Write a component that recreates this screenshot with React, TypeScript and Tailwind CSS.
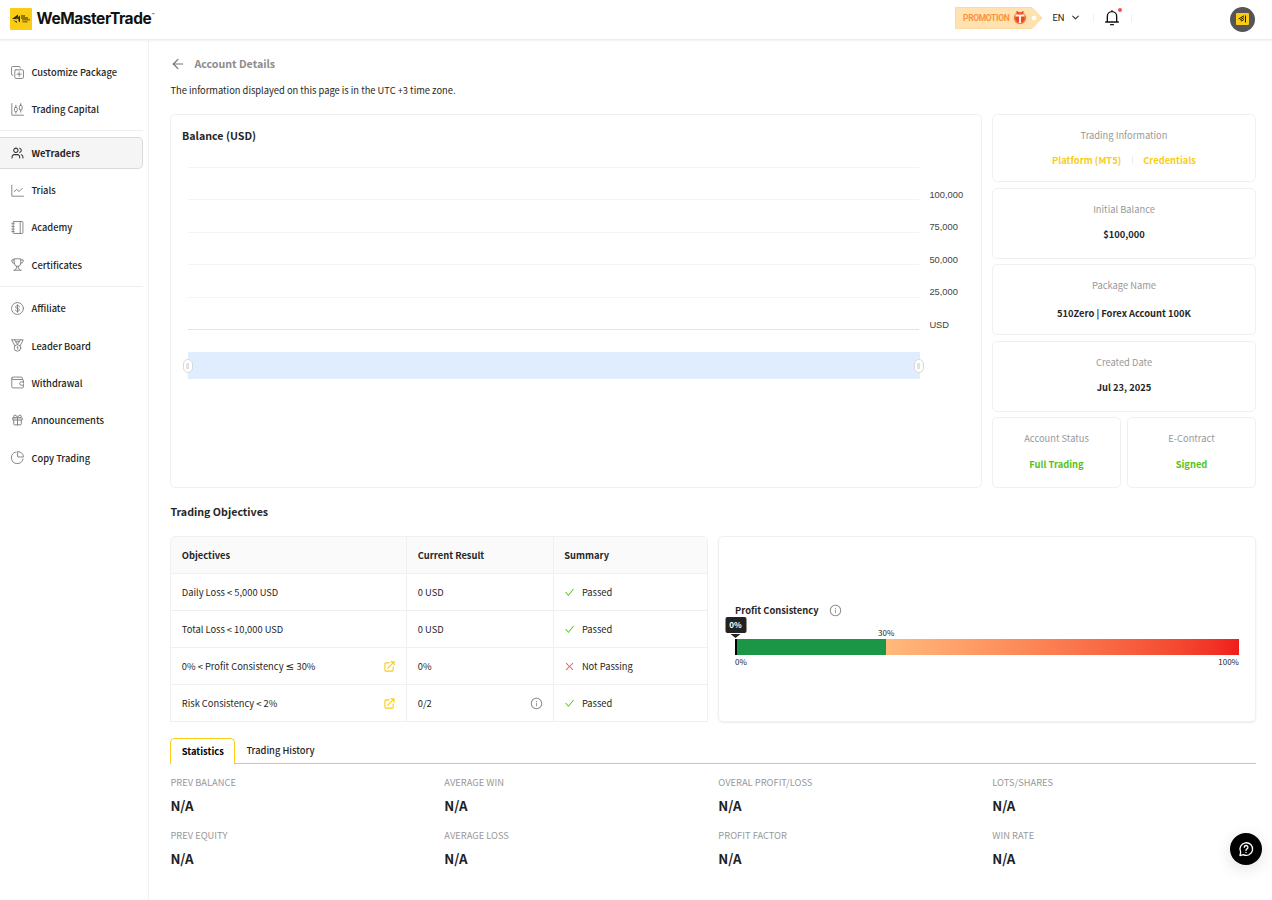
import type { ReactNode } from 'react'
import { ArrowLeft, ChevronDown, Gift, Users } from 'lucide-react'
import { AiOutlineCheck, AiOutlineClose, AiOutlineInfoCircle } from 'react-icons/ai'
import clsx from 'clsx'

const svgProps = {
  width: 13,
  height: 13,
  viewBox: '0 0 24 24',
  fill: 'none',
  stroke: 'currentColor',
  strokeWidth: 1.6,
  strokeLinecap: 'round' as const,
  strokeLinejoin: 'round' as const,
}

const icons: Record<string, ReactNode> = {
  package: (
    <svg {...svgProps}>
      <rect x="7" y="7" width="16" height="16" rx="2" />
      <path d="M15 11v8M11 15h8M3.5 17H3a2 2 0 0 1-2-2V3a2 2 0 0 1 2-2h12a2 2 0 0 1 2 2v.5" />
    </svg>
  ),
  capital: (
    <svg {...svgProps}>
      <path d="M1.5 1v21.500H23M9 4v4M9 16v3M18 1v3M18 13v4" />
      <rect x="6.500" y="8" width="5" height="8" rx="2" />
      <rect x="15.500" y="4" width="5" height="9" rx="2" />
    </svg>
  ),
  trials: (
    <svg {...svgProps}>
      <path d="M1.5 2v20.500H23M6 14l4.500-4 4.500 4 6-6" />
    </svg>
  ),
  academy: (
    <svg {...svgProps}>
      <rect x="4" y="1" width="18" height="22" rx="1.500" />
      <path d="M17 1v22M1.500 5H6M1.500 10H6M1.500 15H6M1.500 19.500H6" />
    </svg>
  ),
  certificates: (
    <svg {...svgProps}>
      <path d="M6 1.500h12v8a6 6 0 0 1-12 0zM6 3.500H1.500v2A4.500 4.500 0 0 0 6 10M18 3.500h4.500v2A4.500 4.500 0 0 1 18 10M10.500 15.500v3L7 22.500M13.500 15.500v3l3.500 4M5 22.500h14" />
    </svg>
  ),
  affiliate: (
    <svg {...svgProps}>
      <circle cx="12" cy="12" r="11" />
      <path d="M12 5v14M15.500 9c0-1.500-1.500-2.300-3.500-2.300S8.500 7.600 8.500 9.300c0 3.600 7 1.800 7 5.300 0 1.700-1.500 2.700-3.500 2.700s-3.500-1-3.500-2.700" />
    </svg>
  ),
  leader: (
    <svg {...svgProps}>
      <path d="M1.500 1.500h5L12 10l5.500-8.500h5L17 12.500M1.500 1.500 7 12.500M6.500 1.500h11M9 5h6" />
      <circle cx="12" cy="16.500" r="6" />
      <path d="M11 15l1.500-1v5" />
    </svg>
  ),
  withdrawal: (
    <svg {...svgProps}>
      <path d="M21 7V4a2 2 0 0 0-2-2H3.500a2 2 0 0 0 0 4.500H21a2 2 0 0 1 2 2V11M1.500 4v16a2 2 0 0 0 2 2H21a2 2 0 0 0 2-2v-3M23 11h-4a3 3 0 0 0 0 6h4z" />
    </svg>
  ),
  copy: (
    <svg {...svgProps}>
      <path d="M9.500 1.800A10.800 10.800 0 1 0 22.200 14.500" />
      <path d="M13 1a10 10 0 0 1 10 10H13z" />
    </svg>
  ),
}

const menu = [
  [
    { label: 'Customize Package', icon: icons.package },
    { label: 'Trading Capital', icon: icons.capital },
  ],
  [
    { label: 'WeTraders', icon: <Users size={14} strokeWidth={1.9} />, active: true },
    { label: 'Trials', icon: icons.trials },
    { label: 'Academy', icon: icons.academy },
    { label: 'Certificates', icon: icons.certificates },
  ],
  [
    { label: 'Affiliate', icon: icons.affiliate },
    { label: 'Leader Board', icon: icons.leader },
    { label: 'Withdrawal', icon: icons.withdrawal },
    { label: 'Announcements', icon: <Gift size={14} strokeWidth={1.7} /> },
    { label: 'Copy Trading', icon: icons.copy },
  ],
]

const objectives = [
  { name: 'Daily Loss < 5,000 USD', result: '0 USD', passed: true },
  { name: 'Total Loss < 10,000 USD', result: '0 USD', passed: true },
  {
    name: (
      <span>
        0% &lt; Profit Consistency <span className="font-['DejaVu_Sans',sans-serif] text-[10.500px]">≤</span> 30%
      </span>
    ),
    result: '0%',
    passed: false,
    link: true,
  },
  { name: 'Risk Consistency < 2%', result: '0/2', passed: true, link: true, info: true },
]

const stats = [
  'PREV BALANCE',
  'AVERAGE WIN',
  'OVERAL PROFIT/LOSS',
  'LOTS/SHARES',
  'PREV EQUITY',
  'AVERAGE LOSS',
  'PROFIT FACTOR',
  'WIN RATE',
]

function Header() {
  return (
    <header className="flex h-10 shrink-0 items-center border-b border-[#ececec] pr-[17px] pl-2.5 shadow-[0_1px_2px_rgba(0,0,0,0.06)]">
      <div className="mb-[2px] flex h-[22px] w-[22px] items-center justify-center rounded-[1px] bg-[#facc15]">
        <svg width="18" height="10" viewBox="0 0 18 10" fill="#2b2605">
          <path d="M0 5 6 .5V3L3.500 5zM3.500 5.500 8 1.500v7L6.500 7V4.500zM1 6l4 3V7.500z" />
          <path d="M9 1.500h4v1H9zM9 3.500h7v1H9zM10 5.500h8v.8h-8zM10.500 7.500h5v.8h-5z" />
        </svg>
      </div>
      <div className="mb-[2px] ml-[4.500px] flex font-['Inter',sans-serif] text-[15.500px] leading-5 font-bold tracking-[-0.430px] text-[#111]">
        WeMasterTrade
        <span className="ml-[0.500px] text-[4.500px] leading-[14px] font-normal tracking-normal">™</span>
      </div>

      <div className="mb-1 ml-auto flex items-center">
        <div className="relative h-[22px] w-[88px]">
          <svg width="88" height="22" viewBox="0 0 88 22" className="absolute inset-0">
            <path d="M.5.500h76.500L87 11 77 21.500H.500z" fill="#ffe2b0" stroke="#fdd9a0" />
            <circle cx="79" cy="11" r="2.300" fill="#fff" />
            <circle cx="65" cy="11" r="6.200" fill="#f47b3d" />
            <circle cx="65" cy="11" r="4.600" fill="#e8452f" />
            <path d="M60.500 8.500h9M65 8.500V16" stroke="#fff3dc" strokeWidth="2" />
            <path d="M61.500 4.500l2.500 2M68.500 4.500l-2.500 2" stroke="#e33a2c" strokeWidth="1.500" />
          </svg>
          <span className="relative block pl-2 font-[Roboto,sans-serif] text-[8.500px] leading-[22px] font-bold tracking-[-0.350px] text-[#fb923c]">PROMOTION</span>
        </div>
        <span className="mt-px ml-[9.500px] font-[Roboto,sans-serif] text-[9.330px] text-[#222]">EN</span>
        <ChevronDown size={11} strokeWidth={2.500} className="ml-[5.500px] text-[#333]" />
        <span className="ml-3 h-2 w-px bg-[#f0f0f0]" />
        <div className="relative ml-2.5">
          <svg width="16" height="16" viewBox="0 0 24 24" fill="none" stroke="#111" strokeWidth="2" strokeLinecap="round">
            <path d="M2.500 18h19M5 18V9.500a7 7 0 0 1 14 0V18M12 1v1.500M10 22h4" />
          </svg>
          <span className="absolute -top-[2px] -right-[2px] h-1 w-1 rounded-full bg-[#ff4d4f]" />
        </div>
        <span className="ml-[11px] h-2 w-px bg-[#f0f0f0]" />
        <div className="mt-[3px] ml-[98px] flex h-[25px] w-[25px] items-center justify-center rounded-full bg-[#555]">
          <div className="flex h-3 w-[13px] items-center justify-center rounded-[1px] bg-[#facc15]">
            <svg width="9" height="8" viewBox="0 0 9 8" fill="none" stroke="#1d1a05" strokeWidth="1">
              <path d="M.5 4 6 .8M2 5l4-2.500M3 6.200 6 4.500M7.500.500v7" />
            </svg>
          </div>
        </div>
      </div>
    </header>
  )
}

function Sidebar() {
  return (
    <aside className="w-[149px] shrink-0 border-r border-[#f0f0f0] pt-4">
      {menu.map((group, i) => (
        <div key={i} className={clsx('mr-[5px] flex flex-col gap-[5.330px]', i > 0 && 'mt-[5px] border-t border-[#f0f0f0] pt-[5.450px]')}>
          {group.map((item: any) => (
            <a
              key={item.label}
              className={clsx(
                'flex h-8 items-center gap-[7.400px] pl-[11px] text-[#262626]',
                item.active && 'rounded-r-[5px] border border-l-0 border-[#d9d9d9] bg-[#f5f5f5] font-bold'
              )}
            >
              <span className={clsx('flex w-[13px] justify-center', item.active ? 'text-[#333]' : 'text-[#777]')}>{item.icon}</span>
              <span className={item.active ? '' : 'font-medium'}>{item.label}</span>
            </a>
          ))}
        </div>
      ))}
    </aside>
  )
}

function Handle({ className }: { className: string }) {
  return (
    <div className={clsx('absolute top-[7px] flex h-[14px] w-[10px] items-center justify-center rounded-full border border-[#d9d9d9] bg-white', className)}>
      <span className="h-1.5 w-[3px] bg-[#e2e2e2]" />
    </div>
  )
}

function BalanceChart() {
  return (
    <section className="h-[374px] w-[812px] rounded-[5px] border border-[#f0f0f0] px-[10.600px] pt-[11px]">
      <h2 className="text-[10.670px] leading-5 font-bold">Balance (USD)</h2>
      <div className="mt-[21px] ml-[6px] flex">
        <div className="w-[731px]">
          {[0, 1, 2, 3, 4].map((n) => (
            <div key={n} className="h-[32.400px] border-t border-[#f3f3f3]" />
          ))}
          <div className="border-t border-[#e4e4e4]" />
        </div>
        <div className="ml-[10.400px] pt-[12px] font-['Liberation_Sans',Arial,sans-serif] text-[9.330px] text-[#444]">
          {['100,000', '75,000', '50,000', '25,000', 'USD'].map((t) => (
            <div key={t} className="h-[32.400px] leading-[32.400px]">{t}</div>
          ))}
        </div>
      </div>
      <div className="relative mt-[11px] ml-[6px] h-[27px] w-[732px] bg-[#e0edff]">
        <Handle className="-left-[5px]" />
        <Handle className="-right-[4px]" />
      </div>
    </section>
  )
}

function InfoCard({ label, className, children }: { label: string; className: string; children: ReactNode }) {
  return (
    <div className={clsx('flex flex-col items-center rounded-[5px] border border-[#f0f0f0] pt-3', className)}>
      <span className="leading-4 text-[#999]">{label}</span>
      {children}
    </div>
  )
}

function AccountInfo() {
  return (
    <div className="flex w-[264px] flex-col">
      <InfoCard label="Trading Information" className="h-[68px]">
        <div className="mt-[9px] flex items-center font-bold text-[#facc15]">
          <a className="leading-4">Platform (MT5)</a>
          <span className="mx-[10.500px] h-2 w-px bg-[#ececec]" />
          <a className="leading-4">Credentials</a>
        </div>
      </InfoCard>
      <InfoCard label="Initial Balance" className="mt-[6px] h-[71px]">
        <b className="mt-[9px] leading-4">$100,000</b>
      </InfoCard>
      <InfoCard label="Package Name" className="mt-[5px] h-[71px]">
        <b className="mt-[12px] leading-4">510Zero | Forex Account 100K</b>
      </InfoCard>
      <InfoCard label="Created Date" className="mt-[6px] h-[71px]">
        <b className="mt-[9px] leading-4">Jul 23, 2025</b>
      </InfoCard>
      <div className="mt-[5px] grid grid-cols-2 gap-[6px] text-center">
        <InfoCard label="Account Status" className="h-[71px]">
          <b className="mt-[10px] leading-4 text-[#52c41a]">Full Trading</b>
        </InfoCard>
        <InfoCard label="E-Contract" className="h-[71px]">
          <b className="mt-[10px] leading-4 text-[#52c41a]">Signed</b>
        </InfoCard>
      </div>
    </div>
  )
}

function LinkIcon() {
  return (
    <svg {...svgProps} width={11} height={11} strokeWidth={2.400} className="mr-[1.500px] text-[#facc15]">
      <path d="M11 4H4a2 2 0 0 0-2 2v14a2 2 0 0 0 2 2h14a2 2 0 0 0 2-2v-7M8 16 22 2M15 2h7v7" />
    </svg>
  )
}

function ObjectivesTable() {
  const row = 'grid h-[37px] grid-cols-[236px_147px_1fr] border-b border-[#f0f0f0]'
  const cell = 'flex items-center justify-between border-r border-[#f0f0f0] px-[10.400px]'
  return (
    <div className="w-[538px] overflow-hidden rounded-t-[5px] border border-b-0 border-[#f0f0f0]">
      <div className={clsx(row, 'bg-[#fafafa] font-bold')}>
        <div className={cell}>Objectives</div>
        <div className={cell}>Current Result</div>
        <div className="flex items-center px-[9.900px]">Summary</div>
      </div>
      {objectives.map((o, i) => (
        <div key={i} className={row}>
          <div className={cell}>
            {o.name}
            {o.link && <LinkIcon />}
          </div>
          <div className={cell}>
            {o.result}
            {o.info && <AiOutlineInfoCircle size={13} className="text-[#888]" />}
          </div>
          <div className="flex items-center gap-[6.600px] px-[9.900px]">
            {o.passed ? <AiOutlineCheck size={11} className="text-[#52c41a]" /> : <AiOutlineClose size={11} className="text-[#ff4d4f]" />}
            {o.passed ? 'Passed' : 'Not Passing'}
          </div>
        </div>
      ))}
    </div>
  )
}

function ProfitConsistency() {
  return (
    <div className="flex w-[538px] flex-col justify-center rounded-[5px] border border-[#f0f0f0] px-4 pt-3 shadow-[0_1px_2px_rgba(0,0,0,0.08)]">
      <div className="flex items-center gap-2.5 leading-4 font-bold">
        Profit Consistency
        <AiOutlineInfoCircle size={13} className="text-[#888]" />
      </div>
      <div className="relative mt-[21px] flex h-4">
        <div className="w-[30%] bg-[#1a9646]" />
        <div className="flex-1 bg-linear-to-r from-[#ffb97b] to-[#ef1c1c]" />
        <div className="absolute top-0 left-0 h-4 w-0.5 bg-black" />
        <span className="absolute -top-[12px] left-[30%] -translate-x-1/2 text-[8px] leading-3">30%</span>
        <div className="absolute -top-[22px] left-[0.500px] flex -translate-x-1/2 flex-col items-center">
          <span className="flex h-4 w-[21px] items-center justify-center rounded-[2px] bg-[#222] text-[8px] font-bold text-white">0%</span>
          <span className="mt-px h-0 w-0 border-x-[5px] border-t-[4px] border-x-transparent border-t-[#222]" />
        </div>
      </div>
      <div className="mt-px flex justify-between text-[8px] leading-3">
        <span>0%</span>
        <span>100%</span>
      </div>
    </div>
  )
}

export default function App() {
  return (
    <div className="flex h-[900px] w-[1272px] flex-col overflow-hidden bg-white font-['Noto_Sans_CJK_SC',sans-serif] text-[9.330px] leading-4 text-[#262626]">
      <Header />
      <div className="flex min-h-0 flex-1">
        <Sidebar />
        <main className="flex-1 pr-4 pl-[21.400px]">
          <div className="mt-[14px] flex items-center gap-2 text-[10.670px] leading-5 font-bold text-[#8c8c8c]">
            <ArrowLeft size={16} strokeWidth={1.800} className="text-[#777]" />
            Account Details
          </div>
          <p className="mt-[8px] leading-4">The information displayed on this page is in the UTC +3 time zone.</p>

          <div className="mt-[16px] flex justify-between">
            <BalanceChart />
            <AccountInfo />
          </div>

          <h2 className="mt-[14px] text-[10.670px] leading-5 font-bold">Trading Objectives</h2>
          <div className="mt-[14px] flex justify-between">
            <ObjectivesTable />
            <ProfitConsistency />
          </div>

          <div className="mt-[16px] flex h-[26px]">
            <div className="w-[65px] rounded-t-[5px] border border-b-0 border-[#facc15] pl-[10.400px] leading-[25px] font-bold text-black">Statistics</div>
            <div className="flex-1 border-b border-[#facc15] pl-[11px] leading-[25px] font-medium">Trading History</div>
          </div>

          <div className="mt-[10px] grid grid-cols-4 gap-x-[10.300px] gap-y-[10px]">
            {stats.map((s) => (
              <div key={s}>
                <div className="leading-4 text-[#999]">{s}</div>
                <div className="mt-[5px] text-[13.330px] leading-[22px] font-bold text-[#1f1f1f]">N/A</div>
              </div>
            ))}
          </div>
        </main>
      </div>

      <button className="fixed right-[10px] bottom-[35px] flex h-8 w-8 items-center justify-center rounded-full bg-black text-white shadow-[0_4px_16px_rgba(0,0,0,0.12)]">
        <svg {...svgProps} width={16} height={16} strokeWidth={2}>
          <path d="M3 22l1-5.500A9.500 9.500 0 1 1 8 20.500zM9.500 9.500a2.700 2.700 0 1 1 4 2.300c-1 .6-1.500 1-1.500 2.200M12 17v.2" />
        </svg>
      </button>
    </div>
  )
}
